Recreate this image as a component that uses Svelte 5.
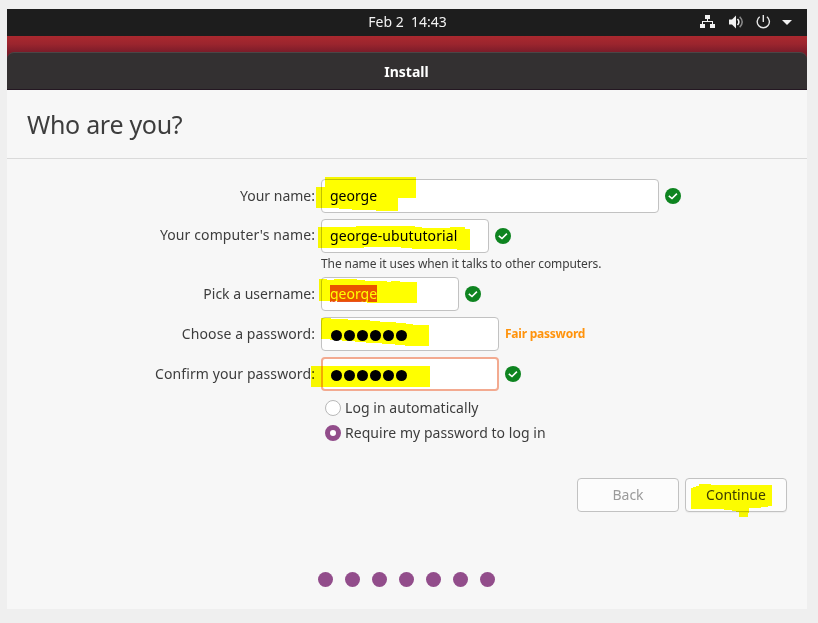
<script>
  const fields = [
    { label: 'Your name:', value: 'george', width: 338, ok: true },
    { label: "Your computer's name:", value: 'george-ubututorial', width: 168, ok: true, wide: true, raised: true, help: 'The name it uses when it talks to other computers.' },
    { label: 'Pick a username:', value: 'george', width: 138, ok: true, selected: true },
    { label: 'Choose a password:', dots: 6, width: 178, wide: true, strength: 'Fair password' },
    { label: 'Confirm your password:', dots: 6, width: 178, wide: true, ok: true, focus: true }
  ];
  // Yellow highlighter strokes, in page coordinates
  const marks = [
    '325,177 416,177 416,198 398,198 398,211 376,211 376,210 352,210 352,209 339,209 339,208 316,208 316,187 325,187',
    '318,227 356,227 356,226 415,226 415,227 422,227 422,228 450,228 450,227 465,227 465,229 470,229 470,250 457,250 457,249 412,249 412,248 401,248 401,247 364,247 364,248 318,248',
    '319,279 327,279 327,280 334,280 334,279 357,279 357,280 365,280 365,281 387,281 387,282 391,282 391,281 400,281 400,282 417,282 417,303 367,303 367,302 362,302 362,301 319,301',
    '321,318 331,318 331,319 348,319 348,320 370,320 370,321 380,321 380,322 396,322 396,323 406,323 406,324 413,324 413,325 429,325 429,346 405,346 405,345 395,345 395,344 382,344 382,343 366,343 366,342 355,342 355,341 342,341 342,340 330,340 330,339 321,339',
    '311,366 430,366 430,387 311,387',
    '699,484 711,484 711,485 772,485 772,506 768,506 768,507 761,507 761,508 749,508 749,513 748,513 748,517 739,517 739,512 736,512 736,511 732,511 732,510 724,510 724,509 691,509 691,488 693,488 693,487 696,487 696,486 699,486'
  ];
</script>

<div class="page">
  <div class="screen">
    <div class="topbar">
      <span class="clock">Feb 2&nbsp; 14:43</span>
      <div class="tray">
        <svg width="16" height="16" viewBox="0 0 16 16"><path d="M6 1h5v4H9v2h5v3h2v4h-5v-4h2V8H4v2h2v4H1v-4h2V7h5V5H6z" fill="#f2f2f2" /></svg>
        <svg width="16" height="16" viewBox="0 0 16 16" fill="none"><path d="M1 5.500h3L8 1.500v13L4 10.500H1z" fill="#f2f2f2" /><path d="M9.500 5q2.800 3 0 6" stroke="#f2f2f2" stroke-width="1.500" /><path d="M11.700 2.700q5 5.300 0 10.600" stroke="#8a8a8a" stroke-width="1.500" /></svg>
        <svg width="16" height="16" viewBox="0 0 16 16" fill="none" stroke="#e8e8e8" stroke-width="1.400"><path d="M4.700 2.800a6.100 6.100 0 1 0 7.200 0M8.300 1v7" /></svg>
        <svg class="caret" width="10" height="5" viewBox="0 0 10 5"><path d="M0 0h10L5 5z" fill="#f2f2f2" /></svg>
      </div>
    </div>
    <div class="wallpaper"><div class="titlebar">Install</div></div>
    <header><h1>Who are you?</h1></header>

    <main>
      {#each fields as f}
        <div class="row">
          <span class="label" class:wide={f.wide} class:raised={f.raised}>{f.label}</span>
          <div class="entry" class:focus={f.focus} class:wide={f.wide} style:width="{f.width}px">
            {#if f.dots}
              <span class="bullets">{#each Array(f.dots) as _}<i></i>{/each}</span>
            {:else}
              <span class:selected={f.selected}>{f.value}</span>
            {/if}
          </div>
          {#if f.ok}
            <svg class="ok" width="16" height="16" viewBox="0 0 16 16"><circle cx="8" cy="8" r="8" fill="#0e8420" /><path d="M3.800 7.800l3.200 2.700 4.900-4.900" fill="none" stroke="#fff" stroke-width="1.600" /></svg>
          {/if}
          {#if f.strength}<strong>{f.strength}</strong>{/if}
        </div>
        {#if f.help}<p class="help">{f.help}</p>{/if}
      {/each}
      <div class="options">
        <div class="radio"><i></i><span>Log in automatically</span></div>
        <div class="radio on"><i></i><span>Require my password to log in</span></div>
      </div>
    </main>

    <div class="actions">
      <button disabled>Back</button>
      <button>Continue</button>
    </div>
    <div class="steps">{#each Array(7) as _}<i></i>{/each}</div>
  </div>

  <svg class="marker" width="818" height="623" viewBox="0 0 818 623" shape-rendering="crispEdges">
    {#each marks as points}<polygon {points} fill="#ff0" />{/each}
  </svg>
</div>

<style>
  .page { position: relative; box-sizing: border-box; width: 818px; height: 623px; padding: 9px 11px 14px 7px; background: #efefef; color: #3d3d3d; font: 14px/20px "Noto Sans", "Open Sans", sans-serif; overflow: hidden; white-space: nowrap; isolation: isolate; }
  .screen { width: 800px; height: 600px; background: #f7f7f7; display: flex; flex-direction: column; }
  .topbar { flex: none; height: 27px; background: #1d1d1d; display: grid; grid-template-columns: 1fr auto 1fr; align-items: center; color: #f2f2f2; }
  .clock { grid-column: 2; padding: 0 0 1px 1px; }
  .tray { justify-self: end; display: flex; align-items: center; gap: 12px; padding: 0 15px 1px 0; }
  .tray svg { display: block; }
  .tray svg:nth-child(2) { margin: 0 -1px 0 1px; }
  .tray .caret { margin: 0 0 0 -1px; }
  .wallpaper { flex: none; padding-top: 16px; background: linear-gradient(#aa282e 0, #9b252e 8px, #7c1c29 16px, #731b28 24px); }
  .titlebar { box-sizing: border-box; height: 38px; border-top: 1px solid #4b4546; border-bottom: 1px solid #241722; border-radius: 7px 7px 0 0; background: #333031; color: #fff; text-align: center; font-weight: 700; line-height: 37px; padding-right: 1px; }
  header { box-sizing: border-box; flex: none; height: 69px; border-bottom: 1px solid #dadada; padding: 17px 20px; }
  h1 { margin: 0; font-weight: 400; font-size: 25px; line-height: 34px; letter-spacing: -.3px; }
  main { padding-top: 20px; }
  .row { display: flex; align-items: center; height: 34px; margin-bottom: 6px; }
  .label { width: 308px; margin-right: 6px; text-align: right; }
  .wide { letter-spacing: .1px; }
  .raised { padding-bottom: 2px; }
  .entry { box-sizing: border-box; height: 34px; border: 1px solid #c2c2c2; border-radius: 4px; background: #fff; display: flex; align-items: center; padding-left: 8px; color: #000; }
  .entry.focus { border: 2px solid #f3aa90; padding-left: 7px; }
  .selected { background: #e95420; color: #fff; line-height: 17px; margin-bottom: 1px; }
  .bullets { display: flex; gap: 2px; padding: 2px 0 0 1px; }
  .bullets i { width: 11px; height: 11px; border-radius: 50%; background: #000; }
  .ok { margin-left: 6px; }
  strong { margin-left: 6px; color: #ff930c; font-size: 12px; letter-spacing: -.23px; }
  .help { margin: -5px 0 3px 314px; font-size: 12px; line-height: 20px; letter-spacing: -.1px; }
  .options { margin-top: -2px; }
  .radio { display: flex; align-items: center; gap: 4px; height: 25px; padding-left: 318px; letter-spacing: .05px; }
  .radio i { box-sizing: border-box; width: 16px; height: 16px; border: 1px solid #b8b8b8; border-radius: 50%; background: #fff; }
  .radio.on i { border: 5px solid #924d8b; }
  .actions { display: flex; justify-content: flex-end; gap: 6px; padding: 33px 20px 0 0; }
  button { box-sizing: border-box; width: 102px; height: 34px; padding: 0; border: 1px solid #c2c2c2; border-radius: 4px; background: #fcfcfc; color: #3d3d3d; font: inherit; box-shadow: 0 1px 1px #0000000c; }
  button:disabled { color: #9b9b9b; box-shadow: none; }
  .steps { display: flex; justify-content: center; gap: 12px; margin-top: 60px; padding-right: 1px; }
  .steps i { width: 15px; height: 15px; border-radius: 50%; background: #924d8b; }
  .marker { position: absolute; left: 0; top: 0; mix-blend-mode: multiply; pointer-events: none; }
</style>
